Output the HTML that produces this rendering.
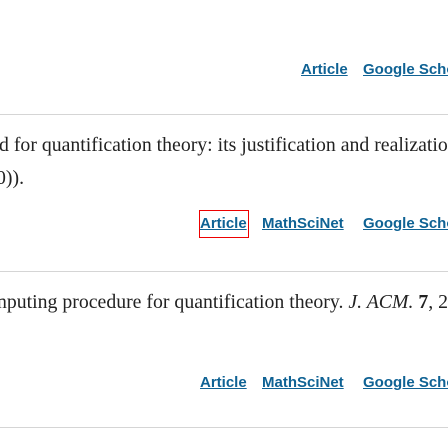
<!DOCTYPE html>
<html><head><style>
html,body{margin:0;width:448px;height:448px;overflow:hidden;}
body{background:#fff;position:relative;font-family:"Liberation Serif",serif;}
.t{position:absolute;white-space:nowrap;font-size:19.8px;color:#222;}
.l{position:absolute;white-space:nowrap;font-family:"Liberation Sans",sans-serif;font-weight:bold;font-size:15px;line-height:18px;color:#0f6294;text-decoration:underline;}
.hr{position:absolute;left:0;width:448px;height:1px;background:#d5d5d5}
</style></head><body>
<div class="l" style="left:301px;top:61px">Article</div>
<div class="l" style="left:363px;top:61px">Google Scholar</div>
<div class="hr" style="top:114px"></div>
<div class="t" style="left:-1px;top:134px">d for quantification theory: its justification and realization</div>
<div class="t" style="left:-4px;top:167px">0)).</div>
<div style="position:absolute;left:199px;top:210px;width:50px;height:28px;border:1px solid #e00;box-sizing:border-box"></div>
<div class="l" style="left:200px;top:215px">Article</div>
<div class="l" style="left:262px;top:215px">MathSciNet</div>
<div class="l" style="left:363px;top:215px">Google Scholar</div>
<div class="hr" style="top:271px"></div>
<div class="t" style="left:-3px;top:291px">nputing procedure for quantification theory. <i>J. ACM.</i> <b>7</b>, 201</div>
<div class="l" style="left:200px;top:374px">Article</div>
<div class="l" style="left:262px;top:374px">MathSciNet</div>
<div class="l" style="left:363px;top:374px">Google Scholar</div>
<div class="hr" style="top:427px"></div>
</body></html>
